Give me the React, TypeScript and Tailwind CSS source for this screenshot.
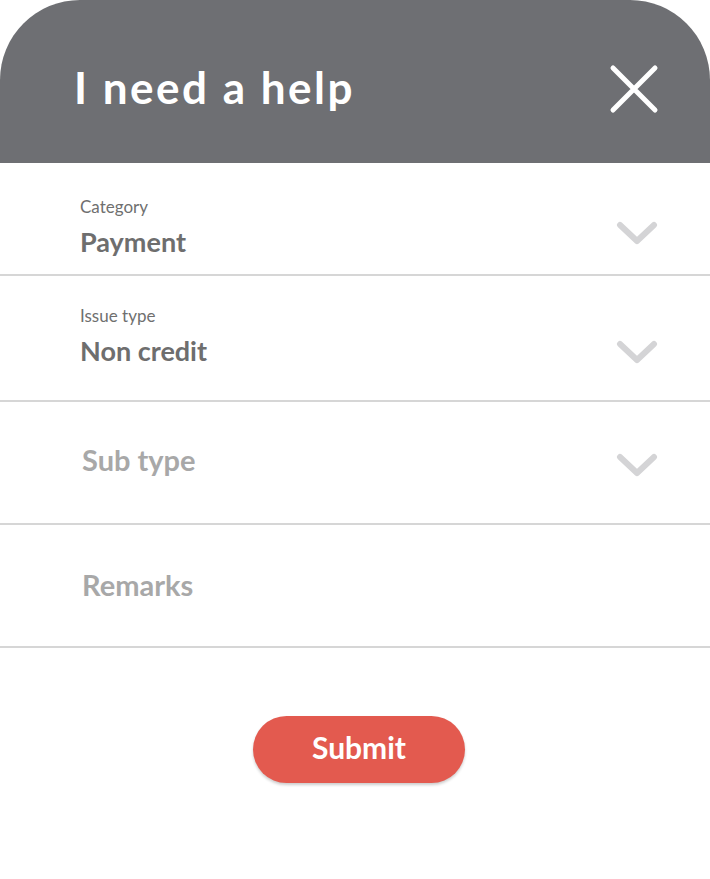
const font = { fontFamily: "Lato, 'Noto Sans', sans-serif" };

const Chevron = ({ className }: { className?: string }) => (
  <svg width="42" height="26" viewBox="0 0 42 26" className={`flex-none ${className ?? ""}`}>
    <path
      d="M4 4 L21 20 L38 4"
      fill="none"
      stroke="#d4d4d6"
      strokeWidth="6"
      strokeLinecap="round"
      strokeLinejoin="round"
    />
  </svg>
);

type FieldProps = {
  label?: string;
  value: string;
  placeholder?: boolean;
  chevron?: string;
  className: string;
};

const Field = ({ label, value, placeholder, chevron, className }: FieldProps) => (
  <div className={`flex border-b-2 border-[#d6d6d6] pl-20 pr-[52px] ${className}`}>
    <div className="flex flex-1 flex-col">
      {label && <span className="text-[17px] leading-5 text-[#6f6f6f]">{label}</span>}
      <span
        className={
          placeholder
            ? "pl-[2px] text-[29px] font-bold leading-[34px] text-[#a8a8a8]"
            : "mt-[10px] text-[27px] font-bold leading-[30px] text-[#6e6e6e]"
        }
      >
        {value}
      </span>
    </div>
    {chevron && <Chevron className={chevron} />}
  </div>
);

export default function App() {
  return (
    <div className="min-h-[879px] w-[710px] bg-white" style={font}>
      <header className="flex h-[163px] items-center justify-between rounded-t-[80px] bg-[#6e6f73] pl-[74px] pr-[50px]">
        <h1 className="pt-[10px] text-[44px] font-bold tracking-[2.5px] text-white">I need a help</h1>
        <button aria-label="Close" className="pt-[14px]">
          <svg width="52" height="52" viewBox="0 0 52 52">
            <path
              d="M5 5 L47 47 M47 5 L5 47"
              stroke="white"
              strokeWidth="5"
              strokeLinecap="round"
            />
          </svg>
        </button>
      </header>

      <Field
        label="Category"
        value="Payment"
        chevron="mt-[24px]"
        className="h-[113px] items-start pt-[34px]"
      />
      <Field
        label="Issue type"
        value="Non credit"
        chevron="mt-[34px]"
        className="h-[126px] items-start pt-[30px]"
      />
      <Field
        value="Sub type"
        placeholder
        chevron="mt-[12px]"
        className="h-[123px] items-center pb-[6px]"
      />
      <Field value="Remarks" placeholder className="h-[123px] items-center pb-[2px]" />

      <div className="flex justify-center pl-[8px] pt-[68px]">
        <button className="h-[67px] w-[212px] rounded-full bg-[#e35a4f] pb-[4px] text-[30px] font-bold text-white shadow-[0_2px_3px_rgba(0,0,0,0.2)]">
          Submit
        </button>
      </div>
    </div>
  );
}
